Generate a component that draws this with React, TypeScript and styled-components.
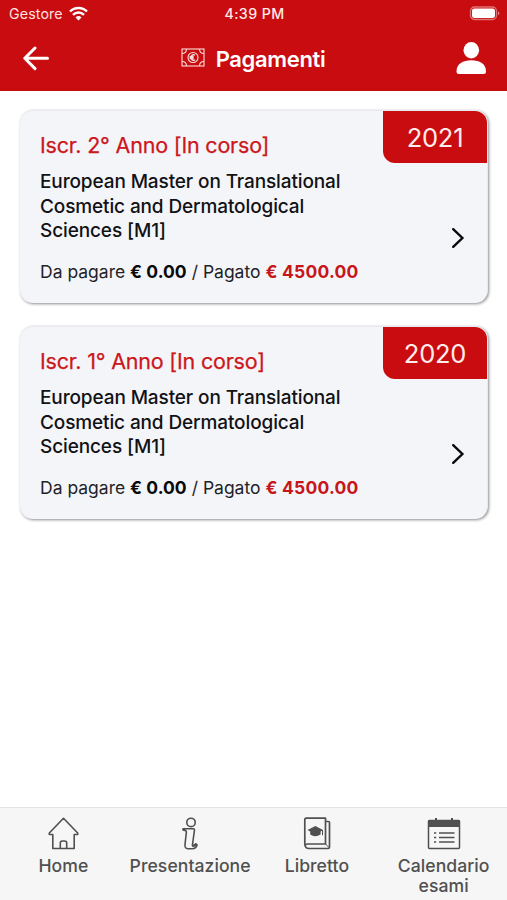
import React from "react";
import styled, { createGlobalStyle } from "styled-components";

const RED = "#c90c0f";
const INK = "#505050";

const GlobalStyle = createGlobalStyle`
  * { box-sizing: border-box; }
  body { margin: 0; background: #fff; font-family: Inter, "Liberation Sans", sans-serif; }
`;

const Screen = styled.div`
  display: flex;
  flex-direction: column;
  width: 507px;
  height: 900px;
  background: #fff;
  overflow: hidden;
`;

const Top = styled.header`
  height: 91px;
  background: ${RED};
  color: #fff;
`;

const StatusBar = styled.div`
  display: grid;
  grid-template-columns: 1fr auto 1fr;
  align-items: center;
  height: 27px;
  padding: 0 7px 0 9px;
  font-size: 14.2px;
  line-height: 27px;
`;

const Carrier = styled.div`
  display: flex;
  align-items: center;
  gap: 6px;
  letter-spacing: 0.15px;
  color: #ffe3e1;
`;

const Clock = styled.div`
  font-weight: 550;
  letter-spacing: 0.4px;
  color: #ffe9e8;
`;

const BatterySlot = styled.div`
  display: flex;
  justify-content: flex-end;
`;

const TitleBar = styled.div`
  display: grid;
  grid-template-columns: 1fr auto 1fr;
  align-items: center;
  height: 64px;
  padding: 0 20px 0 21px;
`;

const Title = styled.h1`
  display: flex;
  align-items: center;
  gap: 11px;
  margin: 0 2px 0 0;
  font-size: 22px;
  font-weight: 600;
  line-height: 28px;
  letter-spacing: -0.35px;

  svg { margin-top: -3px; }
`;

const IconButton = styled.button<{ $end?: boolean }>`
  justify-self: ${(p) => (p.$end ? "end" : "start")};
  display: flex;
  padding: 0;
  border: 0;
  background: none;
  color: #fff;
`;

const List = styled.main`
  flex: 1;
  display: flex;
  flex-direction: column;
  gap: 23px;
  padding: 19px 19px 0 20px;
`;

const Card = styled.article`
  position: relative;
  height: 193px;
  padding: 21px 22px 0 20px;
  border: 1px solid #e9eaed;
  border-width: 1px 1px 0 0;
  border-radius: 13px;
  background: #f4f5f9;
  box-shadow: 1px 1px 3px rgba(0, 0, 0, 0.45);
`;

const Year = styled.div`
  position: absolute;
  top: 0;
  right: 0;
  width: 104px;
  height: 52px;
  border-radius: 0 12px 0 12px;
  background: ${RED};
  color: #ffeceb;
  font-size: 25.5px;
  line-height: 53px;
  letter-spacing: -0.25px;
  text-align: center;
`;

const Heading = styled.h2`
  margin: 0;
  color: #cc171b;
  font-size: 21.5px;
  font-weight: 400;
  line-height: 26px;
  letter-spacing: -0.2px;
  -webkit-text-stroke: 0.25px #cc171b;
`;

const CourseRow = styled.div`
  display: flex;
  justify-content: space-between;
  margin-top: 12px;
`;

const Course = styled.p`
  width: 320px;
  margin: 0;
  color: #111214;
  font-size: 19px;
  font-weight: 450;
  line-height: 24.5px;
  letter-spacing: -0.12px;
`;

const ChevronSlot = styled.div`
  display: flex;
  align-items: flex-end;
  margin-bottom: -5px;
`;

const Amounts = styled.p`
  margin: 16px 0 0;
  color: #222326;
  font-size: 17.5px;
  line-height: 24px;
  white-space: nowrap;
`;

const Amount = styled.strong<{ $paid?: boolean }>`
  font-weight: ${(p) => (p.$paid ? 650 : 700)};
  letter-spacing: ${(p) => (p.$paid ? "0.22px" : "0.05px")};
  color: ${(p) => (p.$paid ? "#c8151a" : "#08090a")};
`;

const Tabs = styled.nav`
  display: grid;
  grid-template-columns: repeat(4, 1fr);
  height: 93px;
  border-top: 1px solid #e3e3e3;
  background: #f6f6f6;
`;

const Tab = styled.a`
  display: flex;
  flex-direction: column;
  align-items: center;
  padding-top: 9px;
  color: ${INK};
  font-size: 17.6px;
  font-weight: 500;
  line-height: 20px;
  letter-spacing: 0.05px;
  text-align: center;

  svg { flex: none; margin-bottom: 5px; }
`;

const Wifi = () => (
  <svg width="19" height="15" viewBox="0 0 19 15" fill="none" stroke="#fff" strokeWidth="2.4">
    <path d="M1 5.5a12 12 0 0 1 17 0M4 8.8a7.8 7.8 0 0 1 11 0" />
    <path d="M6.5 11.4a4.4 4.4 0 0 1 6 0l-3 3z" fill="#fff" stroke="none" />
  </svg>
);

const Battery = () => (
  <svg width="31" height="15" viewBox="0 0 31 15" fill="none">
    <rect x="1.5" y="1" width="26" height="12.5" rx="4" stroke="#e07373" strokeWidth="1.3" />
    <rect x="3" y="2.5" width="23" height="9.5" rx="2.5" fill="#fff" />
    <path d="M29 5.2q2.5 2.1 0 4.2z" fill="#e98b8b" />
  </svg>
);

const BackArrow = () => (
  <svg width="28" height="26" viewBox="0 0 28 26" fill="none" stroke="#fff" strokeWidth="3" strokeLinecap="round" strokeLinejoin="round">
    <path d="M26.5 12.3H4M14 2L3.8 12.3 14 22.6" />
  </svg>
);

const Person = () => (
  <svg width="32" height="34" viewBox="0 0 32 34" fill="#fff">
    <ellipse cx="16.3" cy="8.2" rx="7.8" ry="8.2" />
    <path d="M1.500 29.500C1.500 22 8 18.300 16.300 18.300S31 22 31 29.500q0 2.500-2.500 2.500H4q-2.500 0-2.500-2.500z" />
  </svg>
);

const Banknote = () => (
  <svg width="24" height="19" viewBox="0 0 24 19" fill="none" stroke="#fbdcda" strokeWidth="1.1">
    <rect x="1" y="1" width="22" height="17" />
    <path d="M1 5.5Q5.5 5.5 5.5 1M18.5 1q0 4.5 4.5 4.5M1 13.5q4.5 0 4.5 4.5M18.5 18q0-4.5 4.5-4.5" />
    <circle cx="12" cy="9.5" r="5" />
    <path d="M14 7.2a2.7 2.7 0 1 0 0 4.600M8.600 8.700h4M8.600 10.300h4" strokeWidth="1.4" />
  </svg>
);

const Chevron = () => (
  <svg width="14" height="22" viewBox="0 0 14 22" fill="none" stroke="#090909" strokeWidth="2.4" strokeLinecap="round">
    <path d="M2.2 2.2L11.4 11 2.2 19.8" />
  </svg>
);

const House = () => (
  <svg width="32" height="34" viewBox="0 0 32 34" fill="none" stroke={INK} strokeWidth="1.6" strokeLinejoin="round">
    <path d="M16.500 1.300L2.300 16v1.500h3.500v14h21.400v-14h3.500V16zM13.300 31.500v-5.500q0-2 2-2h2.400q2 0 2 2v5.500" />
  </svg>
);

const Info = () => (
  <svg width="18" height="34" viewBox="0 0 18 34" fill="none" stroke={INK} strokeWidth="1.6" strokeLinejoin="round">
    <circle cx="10" cy="5.4" r="4.2" />
    <path d="M2 11.7h10.500q1 0 1 1.200L11.500 27.500q-.4 2.400 1.300 1.500l2-2.200 1.300 1q-1 4-5 4H7q-3.500 0-3-4.500L5.400 15q0-1.500-1.500-1.600L2 13z" />
    <path d="M12.500 27.500l1.200 1 1.500-1.500" strokeWidth="2" />
  </svg>
);

const Booklet = () => (
  <svg width="28" height="34" viewBox="0 0 28 34" fill="none" stroke={INK} strokeWidth="1.7" strokeLinejoin="round">
    <path d="M22.500 4.500h3q1 0 1 1V30q0 1.500-1.500 1.500H6q-4.200 0-4.200-5V2.500q0-1.300 1.300-1.300h19.400V27H4.800q-2.300 0-2.500 1.500" />
    <path d="M22.5 27l3.5 3.5" strokeWidth="1" />
    <path d="M12.400 9L4.500 13l2.700 1.400v3q4.800 3.600 10.400 0v-3l1.400-.7v4.500h1V13z" fill={INK} stroke="none" />
  </svg>
);

const Calendar = () => (
  <svg width="34" height="34" viewBox="0 0 34 34" fill="none" stroke={INK} strokeWidth="1.5">
    <path d="M9 1v4M25 1v4" strokeWidth="2" />
    <rect x="1.5" y="3.5" width="31" height="28" rx="1" />
    <path d="M1 3h32v7H1z" fill={INK} stroke="none" />
    <path d="M12 16h15.5M12 20.5h15.5M12 25h15.5" />
    <path d="M7 16h2.2M7 20.5h2.2M7 25h2.2" />
  </svg>
);

const payments = [
  { year: 2021, ordinal: "2°" },
  { year: 2020, ordinal: "1°" },
];

const PaymentCard = ({ year, ordinal }: { year: number; ordinal: string }) => (
  <Card>
    <Year>{year}</Year>
    <Heading>Iscr. {ordinal} Anno [In corso]</Heading>
    <CourseRow>
      <Course>European Master on Translational Cosmetic and Dermatological Sciences [M1]</Course>
      <ChevronSlot><Chevron /></ChevronSlot>
    </CourseRow>
    <Amounts>
      Da pagare <Amount>€ 0.00</Amount> / Pagato <Amount $paid>€ 4500.00</Amount>
    </Amounts>
  </Card>
);

export default function App() {
  return (
    <>
      <GlobalStyle />
      <Screen>
        <Top>
          <StatusBar>
            <Carrier>Gestore <Wifi /></Carrier>
            <Clock>4:39 PM</Clock>
            <BatterySlot><Battery /></BatterySlot>
          </StatusBar>
          <TitleBar>
            <IconButton aria-label="Indietro"><BackArrow /></IconButton>
            <Title><Banknote />Pagamenti</Title>
            <IconButton $end aria-label="Profilo"><Person /></IconButton>
          </TitleBar>
        </Top>
        <List>
          {payments.map((p) => <PaymentCard key={p.year} {...p} />)}
        </List>
        <Tabs>
          <Tab><House />Home</Tab>
          <Tab><Info />Presentazione</Tab>
          <Tab><Booklet />Libretto</Tab>
          <Tab><Calendar />Calendario<br />esami</Tab>
        </Tabs>
      </Screen>
    </>
  );
}
